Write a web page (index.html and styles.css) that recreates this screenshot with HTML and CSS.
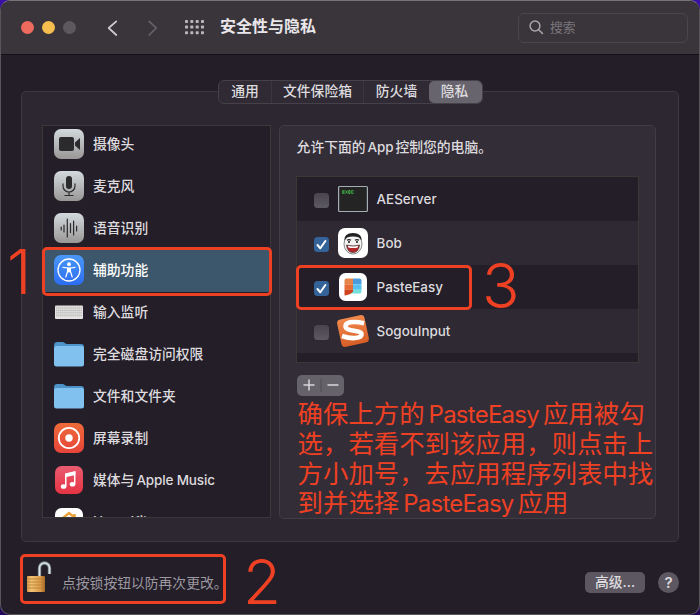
FILE: index.html
```html
<!DOCTYPE html>
<html lang="zh-CN">
<head>
<meta charset="utf-8">
<title>安全性与隐私</title>
<link rel="stylesheet" href="styles.css">
</head>
<body>
<div class="window">
  <header class="titlebar">
    <div class="lights"><i class="light red"></i><i class="light yellow"></i><i class="light gray"></i></div>
    <svg class="nav" width="52" height="18" viewBox="0 0 52 18" fill="none" stroke-width="1.7" stroke-linecap="round" stroke-linejoin="round"><path d="M9.3 2.3 1.7 9l7.6 7" stroke="#cfccd0"/><path d="M42.2 2.3 49.2 9l-7 7" stroke="#66636a"/></svg>
    <svg class="grid" width="20" height="15" viewBox="0 0 20 15" fill="#b9b6bb"><defs><g id="dots"><rect width="3" height="3" rx=".7"/><rect x="5.3" width="3" height="3" rx=".7"/><rect x="10.7" width="3" height="3" rx=".7"/><rect x="16" width="3" height="3" rx=".7"/></g></defs><use href="#dots"/><use href="#dots" y="5.6"/><use href="#dots" y="11.2"/></svg>
    <h1>安全性与隐私</h1>
    <div class="search"><svg width="15" height="15" viewBox="0 0 15 15" fill="none" stroke="#a9a6ab" stroke-width="1.5" stroke-linecap="round"><circle cx="6" cy="6" r="4.9"/><path d="m9.7 9.7 3.8 3.8"/></svg><span>搜索</span></div>
  </header>

  <nav class="tabs"><span class="tab t1">通用</span><span class="tab t2">文件保险箱</span><span class="tab t3">防火墙</span><span class="tab t4 active">隐私</span></nav>

  <main class="panel">
    <ul class="sidebar">
      <li><svg class="icon" viewBox="0 0 30 30"><defs><linearGradient id="silver" x2="0" y2="1"><stop stop-color="#d3dadd"/><stop offset="1" stop-color="#999796"/></linearGradient></defs><rect width="30" height="30" rx="7" fill="url(#silver)"/><rect x="5" y="8" width="15" height="14" rx="2" fill="#2b2a2c"/><path d="M21 13.5 26 9v12l-5-4.500z" fill="#2b2a2c"/></svg><span>摄像头</span></li>
      <li><svg class="icon" viewBox="0 0 30 30"><rect width="30" height="30" rx="7" fill="url(#silver)"/><rect x="12" y="5" width="6" height="13" rx="3" fill="#2b2a2c"/><path d="M9 12.500v2.500a6 6 0 0 0 12 0v-2.500M15 21v3.500M10.500 24.500h9" fill="none" stroke="#2b2a2c" stroke-width="1.2"/></svg><span>麦克风</span></li>
      <li><svg class="icon" viewBox="0 0 30 30"><rect width="30" height="30" rx="7" fill="url(#silver)"/><path d="M7.200 14v3M10 12v7M13.300 6v18M16.500 10.500v9M19.600 8v14M22.600 13v5" stroke="#2b2a2c" stroke-width="1.2" stroke-linecap="round"/></svg><span>语音识别</span></li>
      <li class="selected"><svg class="icon" viewBox="0 0 30 30"><defs><linearGradient id="blue" x2="0" y2="1"><stop stop-color="#4a98f7"/><stop offset="1" stop-color="#2c6df2"/></linearGradient></defs><rect width="30" height="30" rx="7" fill="url(#blue)"/><circle cx="15" cy="15" r="11" fill="none" stroke="#fff" stroke-width="1.300"/><circle cx="15" cy="9.200" r="1.900" fill="#fff"/><path d="M9 12.300 13.600 13v3.200L11.800 22M21 12.300 16.400 13v3.200l1.800 5.800" fill="none" stroke="#fff" stroke-width="1.200" stroke-linecap="round" stroke-linejoin="round"/><path d="M13.300 12.400h3.400v5h-3.400z" fill="#fff"/></svg><span>辅助功能</span></li>
      <li><svg class="icon" viewBox="0 0 30 30"><rect x="1" y="8.500" width="28" height="13.500" rx="1" fill="#e5e4e3"/><g stroke="#aaa9aa" stroke-width=".6"><path d="M2 11h26M2 13.400h26M2 15.800h26M2 18.200h26"/><path d="M2 9.800h26M2 12.200h26M2 14.600h26M2 17h26M2 19.600h26" stroke-dasharray=".6 1.500"/></g></svg><span>输入监听</span></li>
      <li><svg class="icon" viewBox="0 0 30 30"><path id="fback" d="M0 6.500q0-3.500 3-3.500h6l3.500 2H27q3 0 3 3v6H0z" fill="#4c93c9"/><rect id="ffront" y="7" width="30" height="20.500" rx="2.500" fill="#80c1ef"/></svg><span>完全磁盘访问权限</span></li>
      <li><svg class="icon" viewBox="0 0 30 30"><use href="#fback"/><use href="#ffront"/></svg><span>文件和文件夹</span></li>
      <li><svg class="icon" viewBox="0 0 30 30"><defs><linearGradient id="orange" x2="0" y2="1"><stop stop-color="#ed6b39"/><stop offset="1" stop-color="#e8443a"/></linearGradient></defs><rect width="30" height="30" rx="7" fill="url(#orange)"/><circle cx="15" cy="15" r="10.200" fill="none" stroke="#fff" stroke-width="1.800"/><circle cx="15" cy="15" r="3.700" fill="#fff"/></svg><span>屏幕录制</span></li>
      <li><svg class="icon" viewBox="0 0 30 30"><defs><linearGradient id="pink" x2="0" y2="1"><stop stop-color="#e95b70"/><stop offset="1" stop-color="#e63342"/></linearGradient></defs><rect x="1" y="1" width="28" height="28" rx="6.500" fill="url(#pink)"/><path d="M11.800 21V9.200L20.700 7v11.800" fill="none" stroke="#fff" stroke-width="1.500"/><path d="m11.100 8.800 10.300-2.300v3.400l-10.300 2.300z" fill="#fff"/><ellipse cx="9.600" cy="21.500" rx="2.800" ry="2.300" fill="#fff"/><ellipse cx="18.500" cy="19.300" rx="2.800" ry="2.300" fill="#fff"/></svg><span>媒体与<b class="latin gap">Apple Music</b></span></li>
      <li><svg class="icon" viewBox="0 0 30 30"><rect x="1" y="1" width="28" height="28" rx="6.500" fill="#fff"/><path d="M7 12.500 15 6l8 6.500M20.500 7v4" fill="none" stroke="#e9a23b" stroke-width="2.500"/><path d="M11 12.500l4-3.300 4 3.300V22h-8z" fill="#c9c4bd"/></svg><span><b class="latin">HomeKit</b></span></li>
    </ul>

    <section class="detail">
      <p class="intro">允许下面的<b class="latin gap app">App</b>控制您的电脑。</p>
      <ul class="apps">
        <li><i class="check"></i><svg class="icon" viewBox="0 0 30 30"><rect x=".6" y="2.500" width="28.800" height="25" rx="1" fill="#252425" stroke="#a3adb2" stroke-width="1.200"/><path d="M4.500 6.700h2.200M4.500 8h2.200M4.500 9.300h2.200M4.800 6.500v3M7.500 6.500l2 3M9.500 6.500l-2 3M10.500 6.700h2.200M10.500 8h2.200M10.500 9.300h2.200M10.800 6.500v3M13.500 6.700h2.200M13.500 9.300h2.200M13.800 6.500v3" stroke="#46c347" stroke-width=".8"/></svg><span>AEServer</span></li>
        <li><i class="check on"><svg viewBox="0 0 15 15"><path d="m3.500 8 2.800 3.300L11.400 4" /></svg></i><svg class="icon" viewBox="0 0 30 30"><rect width="30" height="30" rx="7" fill="#fff"/><ellipse cx="15" cy="16" rx="9" ry="10" fill="#f5f3f2" stroke="#555" stroke-width=".7"/><path d="M6.300 12.500Q6 5 15 5t8.700 7.500L21 9.500q-6-2-12 0z" fill="#222"/><path d="M9 12.300q2-1.500 4 0M17 12.300q2-1.500 4 0" fill="none" stroke="#222" stroke-width="1.300"/><circle cx="11" cy="14" r=".9"/><circle cx="19" cy="14" r=".9"/><path d="M8.500 17q6.500 1.800 13 0-.8 7.500-6.500 7.500T8.500 17z" fill="#b5262b" stroke="#222" stroke-width=".6"/><path d="M9.800 17.800q5.200 1.200 10.400 0l-.5 1.700q-4.700 1.200-9.400 0z" fill="#fff"/></svg><span>Bob</span></li>
        <li><i class="check on"><svg viewBox="0 0 15 15"><path d="m3.500 8 2.800 3.300L11.400 4" /></svg></i><svg class="icon" viewBox="0 0 30 30"><rect x="1" y="1" width="28" height="28" rx="6.500" fill="#fff"/><path d="M8.500 6.500H15v5.800H6.500v-3.800q0-2 2-2z" fill="#e58549"/><path d="M15 6.500h6.500q2 0 2 2v3.800H15z" fill="#4c9cdd"/><path d="M6.500 12.300H15v5.500H6.500z" fill="#e66d35"/><path d="M15 12.300h8.500v5.500H15z" fill="#58c1ef"/><path d="M15 17.800h8.500v1.700q0 2-2 2H13z" fill="#72e0dc"/><path d="M6.500 17.800H15v1.700q-2.500 3.500-8.500 4z" fill="#cf431f"/></svg><span>PasteEasy</span></li>
        <li><i class="check"></i><svg class="icon sogou" viewBox="0 0 34 34"><g transform="rotate(-12 17 17)"><defs><linearGradient id="sg" x2="0" y2="1"><stop stop-color="#f1894c"/><stop offset="1" stop-color="#d65e27"/></linearGradient></defs><rect x="3" y="3" width="28" height="28" rx="4" fill="url(#sg)"/></g><path d="M28 9.200C16 6.500 9.300 8.500 9.500 12.500c.3 5.500 16.500 3 16 8-.5 4.500-11 4.500-19.500 1.500" fill="none" stroke="#fff" stroke-width="4.600"/></svg><span>SogouInput</span></li>
      </ul>
      <div class="plusminus"><svg width="47" height="21" viewBox="0 0 47 21" stroke="#d9d7da" stroke-width="1.500"><path d="M12 4.500v11M6.500 10h11M30.500 10h11"/><path d="M24 4v13" stroke="#504c54" stroke-width="1"/></svg></div>
      <div class="note">
        <div>确保上方的<b class="latin">PasteEasy</b>应用被勾</div>
        <div>选，若看不到该应用，则点击上</div>
        <div>方小加号，去应用程序列表中找</div>
        <div>到并选择<b class="latin">PasteEasy</b>应用</div>
      </div>
    </section>
  </main>

  <footer class="footer">
    <svg class="lock" width="26" height="34" viewBox="0 0 26 34"><defs><linearGradient id="gold"><stop stop-color="#d69a4a"/><stop offset=".25" stop-color="#f2c374"/><stop offset=".75" stop-color="#d99b49"/><stop offset="1" stop-color="#a56824"/></linearGradient></defs><path d="M13.500 16V8a5 5 0 0 1 10 0v6" fill="none" stroke="#7e8c93" stroke-width="3.300"/><path d="M13.500 16V8a5 5 0 0 1 10 0v6" fill="none" stroke="#d9e2e5" stroke-width="1.600"/><rect x="1" y="16" width="18" height="16" rx="1" fill="url(#gold)"/><path d="M1 19h18M1 22h18M1 25h18M1 28h18" stroke="#b67c34" stroke-width=".8"/></svg>
    <span class="hint">点按锁按钮以防再次更改。</span>
    <button class="advanced">高级...</button><button class="help">?</button>
  </footer>

  <div class="mark m1"></div><div class="mark m2"></div><div class="mark m3"></div>
  <span class="num n1">1</span><span class="num n2">2</span><span class="num n3">3</span>
</div>
</body>
</html>
```
FILE: styles.css
```css
* { box-sizing: border-box; }
body {
  margin: 0;
  background: linear-gradient(#3910a4, #25085a);
  font-family: Inter, "Noto Sans CJK SC", sans-serif;
  font-size: 13.8px;
  color: #dddbde;
}
ul { list-style: none; margin: 0; padding: 0; }
h1, p { margin: 0; }
button { border: 0; padding: 0; font: inherit; color: inherit; }
.window {
  position: relative;
  width: 700px;
  height: 615px;
  border: 1px solid #58555b;
  border-top-color: #777479;
  border-radius: 10px;
  background: #241e29;
  overflow: hidden;
}
.titlebar {
  display: flex;
  align-items: center;
  height: 54px;
  padding: 0 11px 0 20px;
  background: #39353b;
  border-bottom: 1px solid #151018;
}
.lights { display: flex; gap: 8px; }
.light { width: 13px; height: 13px; border-radius: 50%; }
.red { background: #ed6a5f; }
.yellow { background: #f5be4f; }
.gray { background: #5c585e; }
.nav { margin-left: 31px; }
.grid { margin-left: 26px; }
h1 { margin: -3px 0 0 15px; font-size: 16px; line-height: 24px; font-weight: 700; color: #e9e7ea; white-space: nowrap; }
.search {
  display: flex;
  align-items: center;
  gap: 6px;
  width: 170px;
  height: 30px;
  margin-left: auto;
  padding-left: 10px;
  border: 1px solid #4a464c;
  border-radius: 6px;
  font-size: 12.8px;
  color: #79757c;
}
.search span { margin-top: -2px; }
.tabs {
  position: relative;
  z-index: 1;
  display: flex;
  width: 265px;
  height: 24px;
  margin: 25px 0 0 217px;
  border: 1px solid #45404a;
  border-radius: 6px;
  background: #2f2a34;
}
.tab { height: 22px; line-height: 21px; text-align: center; font-weight: 500; white-space: nowrap; }
.t1 { width: 53px; border-right: 1px solid #3a3540; }
.t2 { width: 91px; }
.t3 { width: 66px; border-left: 1px solid #3a3540; }
.t4 { width: 53px; padding-right: 2px; }
.active { background: #68646d; border-radius: 5px; }
.panel {
  display: flex;
  gap: 8px;
  width: 658px;
  height: 451px;
  margin: -13px 0 0 20px;
  padding: 33px 22px 0 20px;
  border: 1px solid #3d3841;
  border-radius: 5px;
  background: #2c2731;
}
.sidebar {
  width: 229px;
  height: 393px;
  overflow: hidden;
  border: 1px solid #3c3837;
  background: #241e29;
}
.sidebar li {
  display: flex;
  align-items: center;
  gap: 9px;
  height: 42px;
  padding-left: 11px;
  font-weight: 500;
  white-space: nowrap;
}
.sidebar li > span { margin-top: -3px; }
.sidebar li:first-child { margin-top: -3px; }
.sidebar .selected { background: #3c566b; box-shadow: 0 1px #3c566b; color: #fff; }
.icon { flex: none; width: 30px; height: 30px; }
.latin { font-weight: inherit; font-size: 13.5px; letter-spacing: -.15px; }
.gap { margin-left: 2px; }
.app { margin-right: 2px; }
.detail {
  width: 378px;
  height: 394px;
  padding: 9px 0 0 17px;
  border: 1px solid #413c45;
  border-radius: 5px;
  background: #332d38;
}
.intro { height: 24px; line-height: 24px; font-weight: 500; white-space: nowrap; }
.apps { width: 343px; height: 187px; margin: 17px 0 0 -1px; border: 1px solid #3a3736; background: #241e29; }
.apps li { display: flex; align-items: center; height: 44px; padding-left: 17px; }
.apps li:nth-child(even) { background: #2e2933; }
.apps span { margin: -1px 0 0 9px; font-size: 13.4px; font-weight: 500; }
.apps .icon { margin-left: 9px; }
.apps .sogou { width: 34px; height: 34px; margin: 0 -2px 0 7px; }
.check { width: 15px; height: 15px; margin-top: 2px; border-radius: 3.5px; background: linear-gradient(#49444e, #5d5962); }
.check.on { background: #34639a; }
.check svg { display: block; fill: none; stroke: #fff; stroke-width: 2; stroke-linecap: round; stroke-linejoin: round; }
.plusminus { width: 47px; height: 21px; margin-top: 12px; border-radius: 5px; background: #66626a; }
.plusminus svg { display: block; }
.note { margin: 3px 0 0 1px; color: #ee4023; font-size: 25.4px; line-height: 29.3px; white-space: nowrap; }
.note .latin { margin: 0 4px; font-size: 24px; letter-spacing: -.75px; }
.footer { display: flex; align-items: center; height: 72px; padding: 8px 20px 0 25px; }
.lock { margin-top: -11px; }
.hint { margin: -1px 0 0 10px; color: #9c99a0; white-space: nowrap; }
.advanced { width: 60px; height: 21px; margin-left: auto; border-radius: 5px; background: #5c5761; font-weight: 500; line-height: 20px; }
.help { width: 21px; height: 21px; margin-left: 13px; border-radius: 50%; background: #5c5761; font-size: 15px; font-weight: 600; line-height: 21px; }
.mark { position: absolute; border: 3px solid #ee4023; border-radius: 5px; }
.m1 { left: 41px; top: 246px; width: 230px; height: 49px; }
.m2 { left: 19px; top: 553px; width: 206px; height: 50px; }
.m3 { left: 295px; top: 264px; width: 176px; height: 45px; }
.num { position: absolute; color: #ee4023; font-size: 62px; line-height: 62px; font-weight: 300; }
.n1 { left: 6px; top: 240px; }
.n2 { left: 242px; top: 550px; }
.n3 { left: 481px; top: 254px; }
```
